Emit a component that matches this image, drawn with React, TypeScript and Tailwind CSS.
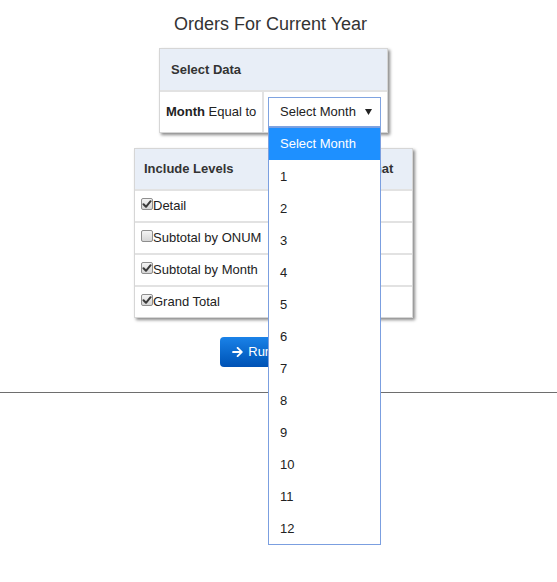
import React from "react";
import { FaArrowRight } from "react-icons/fa";

function Check({ checked }: { checked: boolean }) {
  return (
    <span className="relative -mt-[5px] inline-flex h-[12px] w-[12px] shrink-0 items-center justify-center rounded-[2px] border border-[#8e8e8e] bg-linear-to-b from-[#f4f4f4] to-[#d6d6d6]">
      {checked && (
        <svg width="10" height="10" viewBox="0 0 10 10" className="block">
          <path d="M1.5 5.2 L4 7.8 L8.6 2.2" fill="none" stroke="#3a3a3a" strokeWidth="2" strokeLinecap="round" strokeLinejoin="round" />
        </svg>
      )}
    </span>
  );
}

const months = ["1", "2", "3", "4", "5", "6", "7", "8", "9", "10", "11", "12"];

export default function App() {
  const levels = [
    { label: "Detail", checked: true },
    { label: "Subtotal by ONUM", checked: false },
    { label: "Subtotal by Month", checked: true },
    { label: "Grand Total", checked: true },
  ];
  return (
    <div className="relative min-h-[582px] w-[557px] bg-white font-['Liberation_Sans',Arial,sans-serif] text-[13px] text-[#222]">
      <div className="w-[541px]">
        <h1 className="pt-[14px] text-center text-[18px] leading-[20px] font-normal text-[#333]">
          Orders For Current Year
        </h1>
      </div>

      <div className="flex w-[547px] flex-col items-center">
        {/* Select Data card */}
        <div className="mt-[14px] w-[229px] border border-[#d6d6d6] bg-white shadow-[2px_2px_3px_#8a8a8a]">
          <div className="flex h-[41px] items-center bg-[#e8eef7] pl-[11px] font-bold text-[#333]">
            Select Data
          </div>
          <div className="flex h-[42px] border-t-2 border-[#e2e2e2]">
            <div className="flex w-[102px] items-center pl-[6px] whitespace-nowrap text-[#222]">
              <span className="font-bold">Month</span>&nbsp;Equal to
            </div>
            <div className="flex flex-1 items-center border-l-2 border-[#e2e2e2] pl-[4px]">
              <div className="relative">
                <div className="flex h-[30px] w-[113px] items-center justify-between border border-[#7fa3e0] bg-white pr-[8px] pl-[11px] text-[#222]">
                  <span>Select Month</span>
                  <svg width="7" height="6" viewBox="0 0 7 6">
                    <path d="M0 0 H7 L3.5 6 Z" fill="#222" />
                  </svg>
                </div>
                <div className="absolute top-full left-0 z-50 w-[113px] border border-[#7b9fe0] bg-white">
                  <div className="flex h-[32px] items-center bg-[#1e90ff] pl-[11px] text-white">
                    Select Month
                  </div>
                  {months.map((m) => (
                    <div key={m} className="flex h-[32px] items-center pt-[2px] pl-[11px] text-[#222]">
                      {m}
                    </div>
                  ))}
                </div>
              </div>
            </div>
          </div>
        </div>

        {/* Include Levels card */}
        <div className="mt-[15px] w-[279px] border border-[#d6d6d6] bg-[#e2e2e2] shadow-[2px_2px_3px_#8a8a8a]">
          <div className="flex h-[40px] bg-[#e8eef7] font-bold text-[#333]">
            <div className="flex w-[138px] items-center pl-[9px]">Include Levels</div>
            <div className="flex flex-1 items-center justify-center border-l-2 border-[#e2e2e2] pl-[10px]">
              Report Format
            </div>
          </div>
          {levels.map((l) => (
            <div key={l.label} className="mt-[2px] flex h-[30px] bg-white">
              <div className="flex w-[138px] items-center pl-[6px] whitespace-nowrap">
                <Check checked={l.checked} />
                <span>{l.label}</span>
              </div>
              <div className="flex-1 border-l-2 border-[#e2e2e2]" />
            </div>
          ))}
        </div>

        <button className="mt-[19px] flex h-[30px] items-center gap-[5px] rounded-[4px] bg-linear-to-b from-[#1a82e8] to-[#0052b5] pr-[12px] pl-[12px] text-white">
          <FaArrowRight className="h-[12px] w-[11px]" />
          <span>Run Report</span>
        </button>
      </div>

      <div className="mt-[25px] h-px w-full bg-[#6e6e6e]" />
    </div>
  );
}
